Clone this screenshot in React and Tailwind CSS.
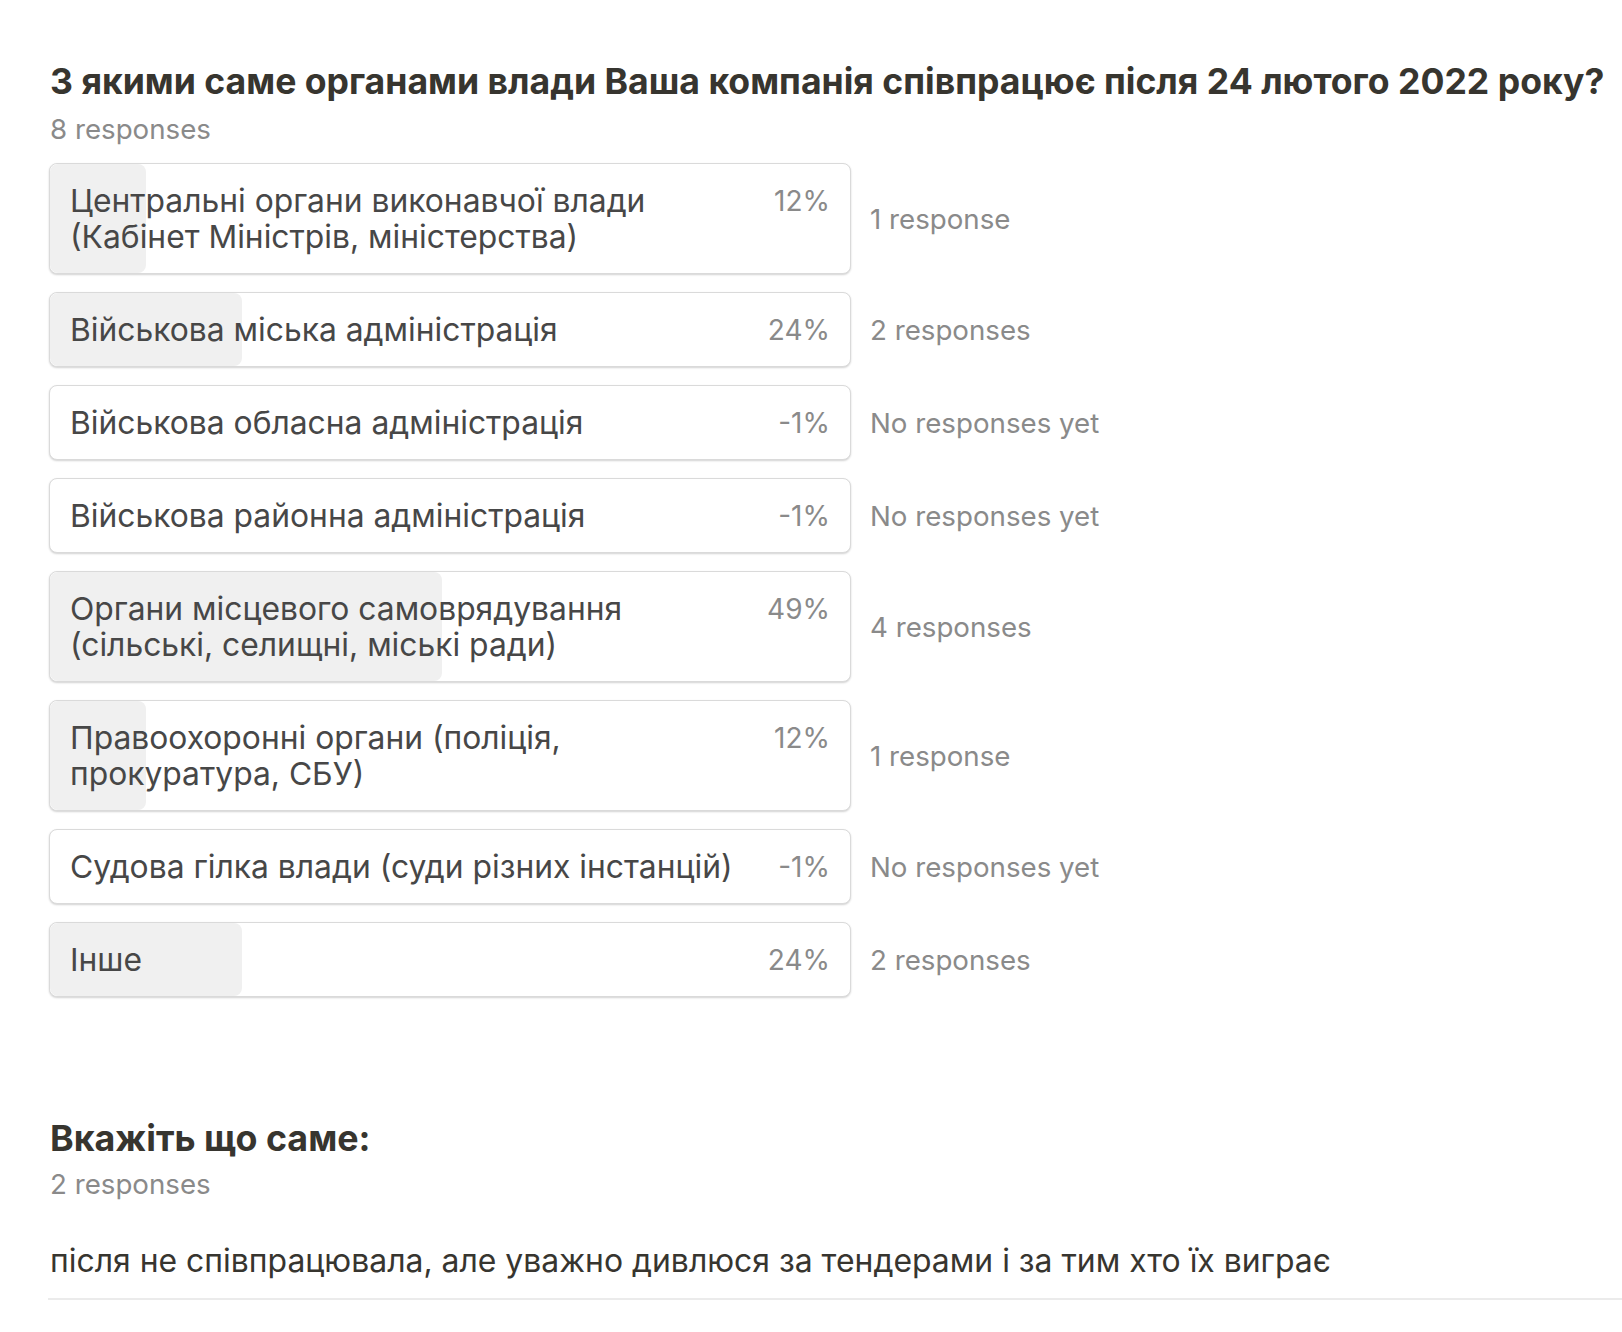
import React from 'react';

const options = [
    { label: ['Центральні органи виконавчої влади', '(Кабінет Міністрів, міністерства)'], pct: 12, responses: '1 response' },
    { label: ['Військова міська адміністрація'], pct: 24, responses: '2 responses' },
    { label: ['Військова обласна адміністрація'], pct: -1, responses: 'No responses yet' },
    { label: ['Військова районна адміністрація'], pct: -1, responses: 'No responses yet' },
    { label: ['Органи місцевого самоврядування', '(сільські, селищні, міські ради)'], pct: 49, responses: '4 responses' },
    { label: ['Правоохоронні органи (поліція,', 'прокуратура, СБУ)'], pct: 12, responses: '1 response' },
    { label: ['Судова гілка влади (суди різних інстанцій)'], pct: -1, responses: 'No responses yet' },
    { label: ['Інше'], pct: 24, responses: '2 responses' },
];

const OptionRow = ({ option }) => (
    <div className="flex items-center">
        <div className="relative w-[802px] shrink-0 rounded-[8px] border border-[#dadada] bg-white shadow-[0_1px_2px_rgba(0,0,0,0.18)] overflow-hidden">
            {/* bar fill */}
            {option.pct > 0 && (
                <div
                    className="absolute top-0 bottom-0 left-0 rounded-[8px] bg-[#f0f0f0]"
                    style={{ width: `${option.pct}%` }}
                />
            )}
            <div className="relative flex justify-between items-start pl-[20px] pr-[20px] py-[18.5px] leading-[36px]">
                <div className="text-[31.8px] text-[#474747]">
                    {option.label.map((line, i) => (
                        <div key={i} className="whitespace-nowrap">{line}</div>
                    ))}
                </div>
                <div className="text-[28px] text-[#8a8a8a] ml-4">{option.pct}%</div>
            </div>
        </div>
        <div className="ml-[19px] pt-[2px] text-[27.7px] text-[#8a8a8a] whitespace-nowrap">{option.responses}</div>
    </div>
);

const App = () => {
    return (
        <div className="min-h-screen bg-white pt-[60px] pl-[49px]" style={{ fontFamily: 'Inter, "Noto Sans", sans-serif' }}>
            <h2 className="pl-[1px] text-[35.6px] leading-[44px] font-bold text-[#37352f] whitespace-nowrap">
                З якими саме органами влади Ваша компанія співпрацює після 24 лютого 2022 року?
            </h2>
            <p className="pl-[1px] mt-[8px] text-[27.7px] leading-[34px] text-[#8a8a8a]">8 responses</p>

            <div className="mt-[17px] flex flex-col gap-[18px]">
                {options.map((opt, i) => (
                    <OptionRow key={i} option={opt} />
                ))}
            </div>

            {/* Second question */}
            <h2 className="pl-[1px] mt-[118.5px] text-[35.8px] leading-[44px] font-bold text-[#37352f]">Вкажіть що саме:</h2>
            <p className="pl-[1px] mt-[7px] text-[27.7px] leading-[34px] text-[#8a8a8a]">2 responses</p>
            <p className="pl-[1px] mt-[40px] text-[31.9px] leading-[40px] text-[#37352f] whitespace-nowrap">
                після не співпрацювала, але уважно дивлюся за тендерами і за тим хто їх виграє
            </p>
            <div className="mt-[17px] -ml-[1px] h-[2px] bg-[#ebebeb]" />
        </div>
    );
};

export default App;
